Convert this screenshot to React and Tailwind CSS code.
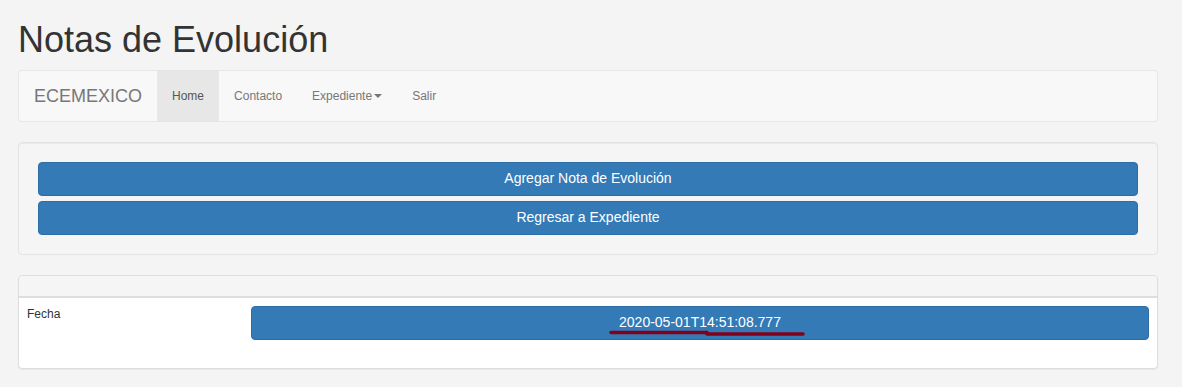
export default function App() {
  const links = ['Home', 'Contacto', 'Expediente', 'Salir'];

  return (
    <div className="min-h-screen bg-[#f4f4f4] font-['Liberation_Sans',Arial,sans-serif] text-[14px] leading-[1.42857] text-[#333]">
      <div className="ml-[18px] w-[1140px] pt-[20px]">
        <h1 className="mb-[10px] text-[36px] leading-[1.1] font-normal">Notas de Evolución</h1>

        {/* navbar */}
        <nav className="flex h-[52px] rounded border border-[#e7e7e7] bg-[#f8f8f8]">
          <div className="h-[50px] px-[15px] py-[15px] text-[18px] leading-[20px] text-[#777]">ECEMEXICO</div>
          {links.map((l, i) => (
            <div
              key={l}
              className={
                i === 0
                  ? 'flex h-[50px] items-center bg-[#e7e7e7] px-[15px] text-[12px] leading-[20px] text-[#555]'
                  : 'flex h-[50px] items-center px-[15px] text-[12px] leading-[20px] text-[#777]'
              }
            >
              {l}
              {l === 'Expediente' && (
                <span className="ml-[2px] inline-block h-0 w-0 border-x-[4px] border-t-[4px] border-x-transparent border-t-[#777]"></span>
              )}
            </div>
          ))}
        </nav>

        {/* well con botones */}
        <div className="mt-[20px] flex flex-col gap-[5px] rounded border border-[#e3e3e3] bg-[#f5f5f5] p-[19px] shadow-[inset_0_1px_1px_rgba(0,0,0,0.05)]">
          <button className="h-[34px] rounded border border-[#2e6da4] bg-[#337ab7] text-[14px] text-white">
            Agregar Nota de Evolución
          </button>
          <button className="h-[34px] rounded border border-[#2e6da4] bg-[#337ab7] text-[14px] text-white">
            Regresar a Expediente
          </button>
        </div>

        {/* panel notas */}
        <div className="mt-[20px] rounded border border-[#ddd] bg-white shadow-[0_1px_1px_rgba(0,0,0,0.05)]">
          <div className="h-[20px] rounded-t bg-[#f5f5f5]"></div>
          <div className="h-[2px] bg-[#ddd]"></div>
          <div className="flex pb-[20px]">
            <div className="w-[224px] p-[8px] text-[12px] leading-[17px]">Fecha</div>
            <div className="flex-1 p-[8px]">
              <button className="relative h-[34px] w-full rounded border border-[#2e6da4] bg-[#337ab7] text-[14px] text-white">
                2020-05-01T14:51:08.777
                <svg className="absolute left-[357px] top-[22px]" width="200" height="10" viewBox="0 0 200 10">
                  <path d="M2 3.5 L98 3.5" stroke="#82001a" strokeWidth="3.5" strokeLinecap="round" />
                  <path d="M98 5 L194 5" stroke="#82001a" strokeWidth="3.5" strokeLinecap="round" />
                </svg>
              </button>
            </div>
          </div>
        </div>
      </div>
    </div>
  );
}
